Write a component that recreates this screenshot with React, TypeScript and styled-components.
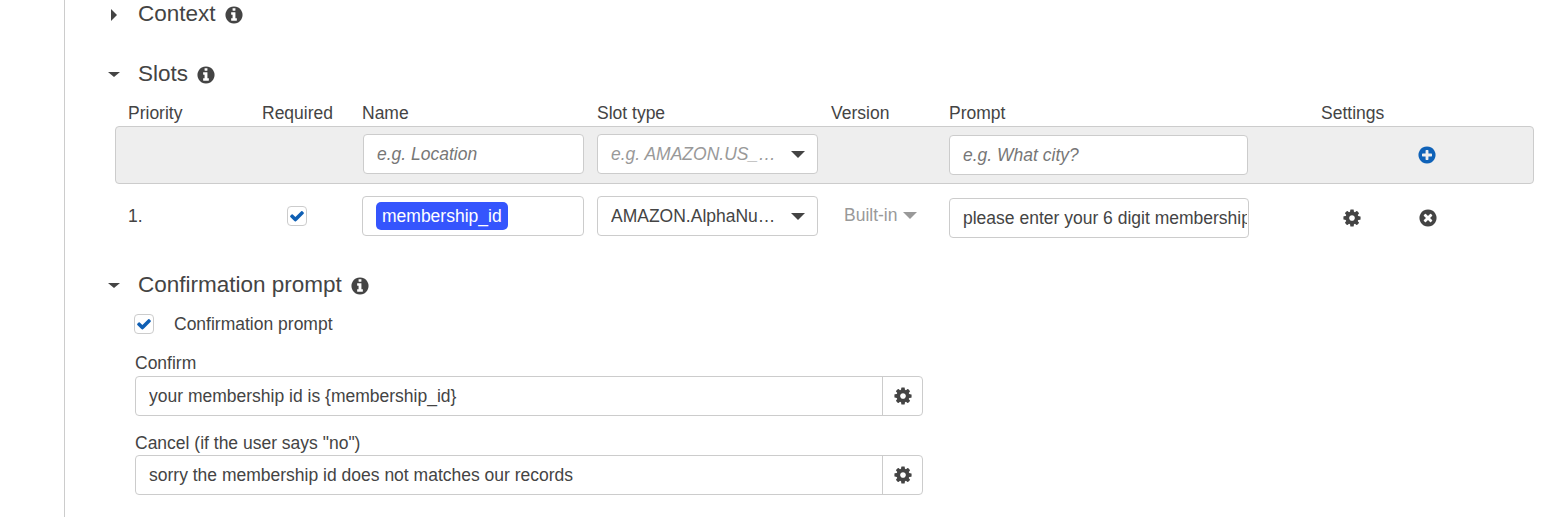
import React from "react";
import styled, { createGlobalStyle } from "styled-components";

const Global = createGlobalStyle`
  html, body { margin: 0; padding: 0; background: #fff; }
  body { font-family: "Liberation Sans", Arial, sans-serif; color: #444; font-size: 17.5px; overflow: hidden; }
`;

const CIRCLE =
  "q0 209-103 385.5t-279.5 279.5-385.5 103-385.5-103-279.5-279.5-103-385.5 103-385.5 279.5-279.5 385.5-103 385.5 103 279.5 279.5 103 385.5z";
const ICONS = {
  info:
    "M1152 1376v-160q0-14-9-23t-23-9h-96v-512q0-14-9-23t-23-9h-320q-14 0-23 9t-9 23v160q0 14 9 23t23 9h96v320h-96q-14 0-23 9t-9 23v160q0 14 9 23t23 9h448q14 0 23-9t9-23zm-128-896v-160q0-14-9-23t-23-9h-192q-14 0-23 9t-9 23v160q0 14 9 23t23 9h192q14 0 23-9t9-23zm640 416" +
    CIRCLE,
  plus:
    "M1344 960v-128q0-26-19-45t-45-19h-256v-256q0-26-19-45t-45-19h-128q-26 0-45 19t-19 45v256h-256q-26 0-45 19t-19 45v128q0 26 19 45t45 19h256v256q0 26 19 45t45 19h128q26 0 45-19t19-45v-256h256q26 0 45-19t19-45zm320-64" +
    CIRCLE,
  times:
    "M1277 1122q0-26-19-45l-181-181 181-181q19-19 19-45 0-27-19-46l-90-90q-19-19-46-19-26 0-45 19l-181 181-181-181q-19-19-45-19-27 0-46 19l-90 90q-19 19-19 46 0 26 19 45l181 181-181 181q-19 19-19 45 0 27 19 46l90 90q19 19 46 19 26 0 45-19l181-181 181 181q19 19 45 19 27 0 46-19l90-90q19-19 19-46zm387-226" +
    CIRCLE,
  cog:
    "M1152 896q0-106-75-181t-181-75-181 75-75 181 75 181 181 75 181-75 75-181zm512-109v222q0 12-8 23t-20 13l-185 28q-19 54-39 91 35 50 107 138 10 12 10 25t-9 23q-27 37-99 108t-94 71q-12 0-26-9l-138-108q-44 23-91 38-16 136-29 186-7 27-36 27h-222q-14 0-24.5-8.5t-11.5-21.5l-28-184q-49-16-90-37l-141 107q-10 9-25 9-14 0-25-11-126-114-165-168-7-10-7-23 0-12 8-23 15-21 51-66.5t54-70.5q-27-50-41-99l-183-27q-13-2-21-12.5t-8-23.5v-222q0-13 8-23.5t19-12.5l186-28q14-46 39-92-40-57-107-138-10-12-10-24 0-10 9-23 26-36 98.5-107.5t94.5-71.5q13 0 26 10l138 107q44-23 91-38 16-136 29-186 7-27 36-27h222q14 0 24.5 8.5t11.5 21.5l28 184q49 16 90 37l142-107q9-9 24-9 13 0 25 10 129 119 165 170 7 8 7 22 0 12-8 23-15 21-51 66.5t-54 70.5q26 50 41 98l183 28q13 2 21 12.5t8 23.5z",
  check:
    "M1671 566q0 40-28 68l-724 724-136 136q-28 28-68 28t-68-28l-136-136-362-362q-28-28-28-68t28-68l136-136q28-28 68-28t68 28l294 295 656-657q28-28 68-28t68 28l136 136q28 28 28 68z",
};

const Svg = styled.svg<{ $size: number; $color: string }>`
  width: ${(p) => p.$size}px;
  height: ${(p) => p.$size}px;
  flex: none;
  display: block;
  fill: ${(p) => p.$color};
`;

function Icon({ name, size = 20, color = "#444" }: { name: keyof typeof ICONS; size?: number; color?: string }) {
  return (
    <Svg $size={size} $color={color} viewBox="0 0 1792 1792" aria-hidden="true">
      <path d={ICONS[name]} />
    </Svg>
  );
}

const Page = styled.div`
  width: 1555px;
  height: 517px;
  overflow: hidden;
  box-sizing: border-box;
  padding-left: 64px;
`;

const Panel = styled.main`
  height: 517px;
  box-sizing: border-box;
  border-left: 1px solid #ccc;
  padding-left: 50px;
  padding-right: 21px;
`;

const Heading = styled.h3<{ $top: number }>`
  margin: ${(p) => p.$top}px 0 0;
  height: 28px;
  display: flex;
  align-items: center;
  font-size: 22.5px;
  font-weight: 400;
  color: #444;
  line-height: 28px;
`;

const ArrowSlot = styled.span`
  width: 23px;
  display: flex;
  align-items: center;
`;

const ArrowDown = styled.span`
  margin-left: -7px;
  margin-top: 1px;
  border-left: 6.5px solid transparent;
  border-right: 6.5px solid transparent;
  border-top: 5.5px solid #444;
`;

const ArrowRight = styled.span`
  margin-left: -4px;
  margin-top: 2px;
  border-top: 6.5px solid transparent;
  border-bottom: 6.5px solid transparent;
  border-left: 6.5px solid #444;
`;

const InfoWrap = styled.span`
  margin-left: 8px;
  margin-top: 2px;
  display: flex;
`;

const columns = "134px 100px 235px 234px 118px 372px 62px 1fr";

const ColumnHeaders = styled.div`
  display: grid;
  grid-template-columns: ${columns};
  padding-left: 13px;
  margin-top: 12px;
  height: 26px;
  line-height: 26px;
`;

const AddRow = styled.div`
  display: grid;
  grid-template-columns: ${columns};
  align-items: center;
  height: 58px;
  box-sizing: border-box;
  padding-left: 12px;
  background: #eee;
  border: 1px solid #ccc;
  border-radius: 4px;
`;

const SlotRow = styled.div`
  display: grid;
  grid-template-columns: ${columns};
  align-items: center;
  height: 64px;
  padding-left: 13px;
`;

const FieldInput = styled.input<{ $w: number; $dy?: number; $dx?: number }>`
  width: ${(p) => p.$w}px;
  height: 40px;
  box-sizing: border-box;
  margin: ${(p) => p.$dy ?? 0}px 0 0 ${(p) => p.$dx ?? 0}px;
  padding: 0 1px 0 13px;
  border: 1px solid #ccc;
  border-radius: 4px;
  background: #fff;
  font: 17.5px "Liberation Sans", Arial, sans-serif;
  color: #444;
  outline: none;
  &::placeholder {
    color: #777;
    font-style: italic;
    opacity: 1;
  }
`;

const NameBox = styled.div`
  width: 222px;
  height: 40px;
  box-sizing: border-box;
  padding-left: 13px;
  display: flex;
  align-items: center;
  border: 1px solid #ccc;
  border-radius: 4px;
  background: #fff;
`;

const Chip = styled.span`
  height: 28px;
  line-height: 28px;
  padding: 0 6px;
  border-radius: 5px;
  background: #3555fd;
  color: #fff;
`;

const SelectBox = styled.div<{ $dy?: number }>`
  width: 221px;
  height: 40px;
  margin-top: ${(p) => p.$dy ?? 0}px;
  box-sizing: border-box;
  padding: 0 12px 0 13px;
  display: flex;
  align-items: center;
  justify-content: space-between;
  border: 1px solid #ccc;
  border-radius: 4px;
  background: #fff;
`;

const SelectText = styled.span<{ $placeholder?: boolean }>`
  width: 168px;
  overflow: hidden;
  white-space: nowrap;
  text-overflow: ellipsis;
  color: ${(p) => (p.$placeholder ? "#999" : "#444")};
  font-style: ${(p) => (p.$placeholder ? "italic" : "normal")};
`;

const Caret = styled.span<{ $muted?: boolean }>`
  display: inline-block;
  border-left: 7px solid transparent;
  border-right: 7px solid transparent;
  border-top: 7px solid ${(p) => (p.$muted ? "#999" : "#444")};
`;

const Version = styled.span`
  margin-top: -2px;
  padding-left: 13px;
  color: #999;
  display: flex;
  align-items: center;
  gap: 5px;
`;

const CheckCell = styled.div`
  padding-left: 25px;
  display: flex;
`;

const CheckBox = styled.span`
  width: 20px;
  height: 20px;
  box-sizing: border-box;
  display: inline-flex;
  align-items: center;
  justify-content: center;
  border: 1px solid #ccc;
  border-radius: 4px;
  background: #fff;
`;

const RowIcon = styled.span<{ $shift: number; $dy?: number }>`
  display: flex;
  justify-content: center;
  margin-left: ${(p) => p.$shift}px;
  margin-top: ${(p) => p.$dy ?? 0}px;
  width: 20px;
`;

const Confirmation = styled.section`
  padding-left: 20px;
`;

const CheckLine = styled.label`
  margin: 11px 0 0 -1px;
  height: 28px;
  display: flex;
  align-items: center;
  gap: 20px;
`;

const FieldLabel = styled.div<{ $top: number; $h: number }>`
  margin-top: ${(p) => p.$top}px;
  height: ${(p) => p.$h}px;
  line-height: 24px;
`;

const InputGroup = styled.div`
  display: flex;
  width: 788px;
  height: 40px;
  box-sizing: border-box;
  border: 1px solid #ccc;
  border-radius: 4px;
  background: #fff;
`;

const GroupInput = styled.input`
  flex: 1;
  min-width: 0;
  border: 0;
  outline: 0;
  background: transparent;
  padding: 0 14px 0 13px;
  font: 17.5px "Liberation Sans", Arial, sans-serif;
  color: #444;
`;

const GroupAddon = styled.span`
  width: 40px;
  box-sizing: border-box;
  border-left: 1px solid #ccc;
  display: flex;
  align-items: center;
  justify-content: center;
`;

const Info = () => (
  <InfoWrap>
    <Icon name="info" />
  </InfoWrap>
);

const Tick = () => (
  <CheckBox>
    <Icon name="check" size={16} color="#0f5fb4" />
  </CheckBox>
);

export default function App() {
  return (
    <Page>
      <Global />
      <Panel>
        <Heading $top={0}>
          <ArrowSlot><ArrowRight /></ArrowSlot>
          Context
          <Info />
        </Heading>
        <Heading $top={32}>
          <ArrowSlot><ArrowDown /></ArrowSlot>
          Slots
          <Info />
        </Heading>
        <ColumnHeaders>
          <span>Priority</span>
          <span>Required</span>
          <span>Name</span>
          <span>Slot type</span>
          <span>Version</span>
          <span>Prompt</span>
          <span>Settings</span>
        </ColumnHeaders>
        <AddRow>
          <span />
          <span />
          <FieldInput $w={221} $dy={-2} $dx={1} placeholder="e.g. Location" />
          <SelectBox $dy={-2}>
            <SelectText $placeholder>e.g. AMAZON.US_CITY</SelectText>
            <Caret />
          </SelectBox>
          <span />
          <FieldInput $w={299} placeholder="e.g. What city?" />
          <span />
          <RowIcon $shift={34}><Icon name="plus" color="#0f62b8" /></RowIcon>
        </AddRow>
        <SlotRow>
          <span>1.</span>
          <CheckCell><Tick /></CheckCell>
          <NameBox><Chip>membership_id</Chip></NameBox>
          <SelectBox>
            <SelectText>AMAZON.AlphaNumeric</SelectText>
            <Caret />
          </SelectBox>
          <Version>Built-in <Caret $muted /></Version>
          <FieldInput $w={300} $dy={4} readOnly defaultValue="please enter your 6 digit membership id" />
          <RowIcon $shift={21} $dy={4}><Icon name="cog" /></RowIcon>
          <RowIcon $shift={35} $dy={4}><Icon name="times" /></RowIcon>
        </SlotRow>
        <Heading $top={23}>
          <ArrowSlot><ArrowDown /></ArrowSlot>
          Confirmation prompt
          <Info />
        </Heading>
        <Confirmation>
          <CheckLine>
            <Tick />
            Confirmation prompt
          </CheckLine>
          <FieldLabel $top={13} $h={25}>Confirm</FieldLabel>
          <InputGroup>
            <GroupInput readOnly defaultValue="your membership id is {membership_id}" />
            <GroupAddon><Icon name="cog" /></GroupAddon>
          </InputGroup>
          <FieldLabel $top={15} $h={24}>Cancel (if the user says "no")</FieldLabel>
          <InputGroup>
            <GroupInput readOnly defaultValue="sorry the membership id does not matches our records" />
            <GroupAddon><Icon name="cog" /></GroupAddon>
          </InputGroup>
        </Confirmation>
      </Panel>
    </Page>
  );
}
